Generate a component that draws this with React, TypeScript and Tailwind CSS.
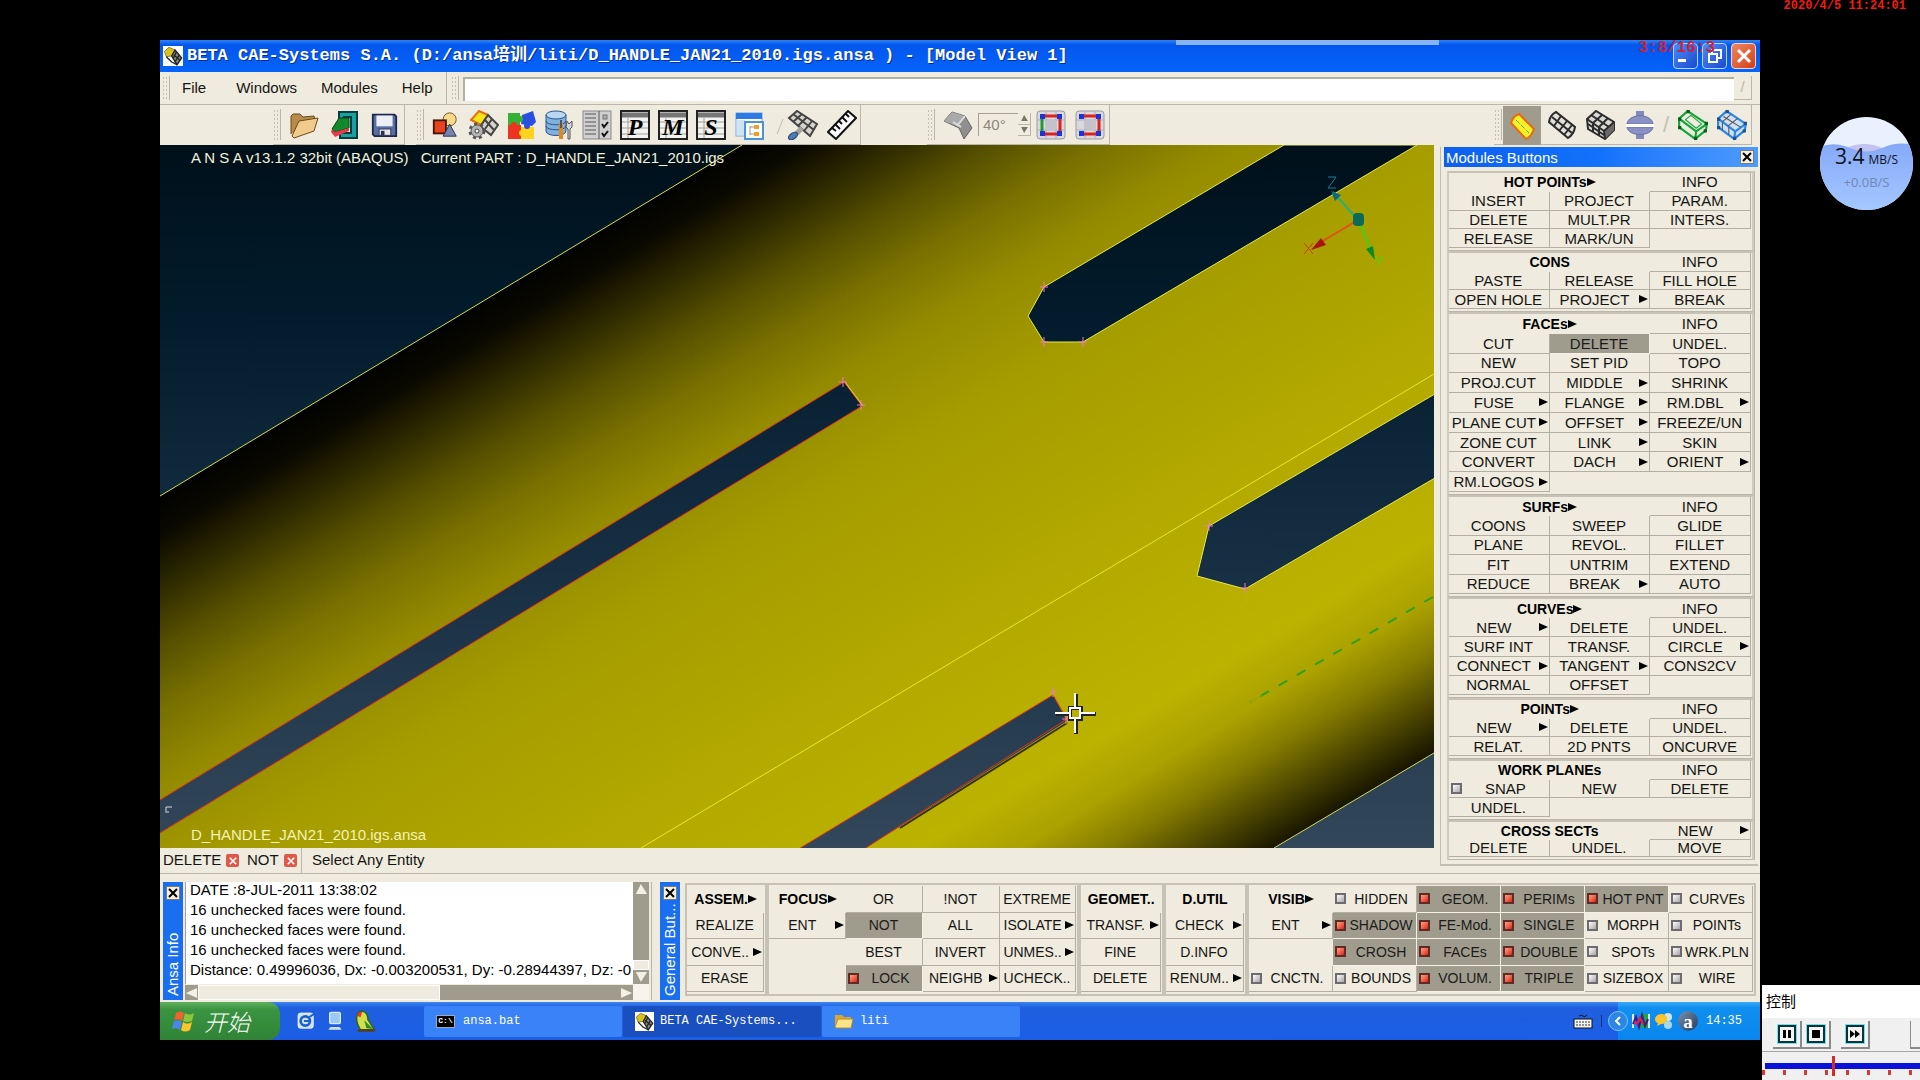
import React from "react";

type CellDef = string | null;
// Cell syntax: "#" heading, ">" suffix opens a submenu, "*" pressed, "[x]" ticked box, "[ ]" empty box

function Tri({ dir = "right", className = "" }: { dir?: "right" | "up" | "down" | "left"; className?: string }) {
  const d = {
    right: "M0 0L9 4L0 8Z",
    left: "M9 0L0 4L9 8Z",
    up: "M0 8L4 0L9 8Z",
    down: "M0 0L9 0L4 8Z",
  }[dir];
  return (
    <svg viewBox="0 0 9 8" className={`h-2 w-[9px] shrink-0 ${className}`} fill="currentColor" aria-hidden="true">
      <path d={d} />
    </svg>
  );
}

function Cell({ def, size }: { def: CellDef; size: string }) {
  if (def === null) return <span />;
  let text = def;
  const heading = text.startsWith("#");
  if (heading) text = text.slice(1);
  const wide = text.startsWith("=");
  if (wide) text = text.slice(1);
  const pressed = text.startsWith("*");
  if (pressed) text = text.slice(1);
  const arrow = text.endsWith(">");
  if (arrow) text = text.slice(0, -1);
  const box = text.startsWith("[");
  const on = text.startsWith("[x]");
  if (box) text = text.slice(3);

  if (heading)
    return (
      <button
        className={`flex min-h-0 min-w-0 items-center justify-center whitespace-nowrap text-[14px] leading-none font-bold text-black ${wide ? "col-span-2" : ""}`}
      >
        {text}
        {arrow && <Tri />}
      </button>
    );
  const tone = pressed
    ? "bg-[#9f9c8e] border-[#f4f1e6] text-[#1c1b17]"
    : "border-[#b3b0a3] text-[#151512]";
  if (box)
    return (
      <label className={`flex min-h-0 min-w-0 items-center whitespace-nowrap border-r border-b pl-[2px] leading-none ${size} ${tone}`}>
        <input
          type="checkbox"
          defaultChecked={on}
          className="size-[11px] shrink-0 appearance-none border-2 border-[#6d6a70] bg-linear-to-br from-white to-[#a9a6a4] checked:border-[#5d2a24] checked:from-[#ff9d85] checked:to-[#d90f0a]"
        />
        <span className="min-w-0 flex-1 text-center">{text}</span>
      </label>
    );
  return (
    <button className={`flex min-h-0 min-w-0 items-center whitespace-nowrap border-r border-b pr-px leading-none ${size} ${tone}`}>
      <span className="min-w-0 flex-1 text-center">{text}</span>
      {arrow && <Tri className="text-black" />}
    </button>
  );
}

const MODULES: { grow: string; cells: CellDef[] }[] = [
  {
    grow: "grow-[75]",
    cells: ["#=HOT POINTs>", "INFO", "INSERT", "PROJECT", "PARAM.", "DELETE", "MULT.PR", "INTERS.", "RELEASE", "MARK/UN", null],
  },
  { grow: "grow-[56]", cells: ["#=CONS", "INFO", "PASTE", "RELEASE", "FILL HOLE", "OPEN HOLE", "PROJECT>", "BREAK"] },
  {
    grow: "grow-[178]",
    cells: [
      "#=FACEs>", "INFO",
      "CUT", "*DELETE", "UNDEL.",
      "NEW", "SET PID", "TOPO",
      "PROJ.CUT", "MIDDLE>", "SHRINK",
      "FUSE>", "FLANGE>", "RM.DBL>",
      "PLANE CUT>", "OFFSET>", "FREEZE/UN",
      "ZONE CUT", "LINK>", "SKIN",
      "CONVERT", "DACH>", "ORIENT>",
      "RM.LOGOS>", null, null,
    ],
  },
  {
    grow: "grow-[97]",
    cells: [
      "#=SURFs>", "INFO",
      "COONS", "SWEEP", "GLIDE",
      "PLANE", "REVOL.", "FILLET",
      "FIT", "UNTRIM", "EXTEND",
      "REDUCE", "BREAK>", "AUTO",
    ],
  },
  {
    grow: "grow-[96]",
    cells: [
      "#=CURVEs>", "INFO",
      "NEW>", "DELETE", "UNDEL.",
      "SURF INT", "TRANSF.", "CIRCLE>",
      "CONNECT>", "TANGENT>", "CONS2CV",
      "NORMAL", "OFFSET", null,
    ],
  },
  { grow: "grow-[56]", cells: ["#=POINTs>", "INFO", "NEW>", "DELETE", "UNDEL.", "RELAT.", "2D PNTS", "ONCURVE"] },
  { grow: "grow-[56]", cells: ["#=WORK PLANEs", "INFO", "[ ]SNAP", "NEW", "DELETE", "UNDEL.", null, null] },
  { grow: "grow-[35]", cells: ["#=CROSS SECTs", "NEW>", "DELETE", "UNDEL.", "MOVE"] },
];

const GENERAL: { grow: string; cols: string; cells: CellDef[] }[] = [
  { grow: "grow-[77]", cols: "grid-cols-1", cells: ["#ASSEM.>", "REALIZE", "CONVE..>", "ERASE"] },
  {
    grow: "grow-[306]",
    cols: "grid-cols-4",
    cells: [
      "#FOCUS>", "OR", "!NOT", "EXTREME",
      "ENT>", "*NOT", "ALL", "ISOLATE>",
      null, "BEST", "INVERT", "UNMES..>",
      null, "*[x]LOCK", "NEIGHB>", "UCHECK..",
    ],
  },
  { grow: "grow-[79]", cols: "grid-cols-1", cells: ["#GEOMET..", "TRANSF.>", "FINE", "DELETE"] },
  { grow: "grow-[78]", cols: "grid-cols-1", cells: ["#D.UTIL", "CHECK>", "D.INFO", "RENUM..>"] },
  {
    grow: "grow-[502]",
    cols: "grid-cols-6",
    cells: [
      "#VISIB>", "[ ]HIDDEN", "*[x]GEOM.", "*[x]PERIMs", "*[x]HOT PNT", "[ ]CURVEs",
      "ENT>", "*[x]SHADOW", "*[x]FE-Mod.", "*[x]SINGLE", "[ ]MORPH", "[ ]POINTs",
      null, "*[x]CROSH", "*[x]FACEs", "*[x]DOUBLE", "[ ]SPOTs", "[ ]WRK.PLN",
      "[ ]CNCTN.", "[ ]BOUNDS", "*[x]VOLUM.", "*[x]TRIPLE", "[ ]SIZEBOX", "[ ]WIRE",
    ],
  },
];

/* ---------- toolbar drawings ---------- */

function Ico({ children, box = "0 0 30 30", className = "size-[30px]" }: { children: React.ReactNode; box?: string; className?: string }) {
  return (
    <svg viewBox={box} className={className} fill="none" aria-hidden="true">
      {children}
    </svg>
  );
}

const AppLogo = ({ className = "size-5" }: { className?: string }) => (
  <Ico className={className}>
    <rect width="30" height="30" fill="#fff" />
    <path d="M2 8L9 2L18 6L13 15L5 16Z" fill="#d8c21c" stroke="#5a5220" />
    <path d="M13 15L18 6L28 18L21 28Z" fill="#8b8a80" stroke="#222" strokeWidth="2" />
    <path d="M16 13L25 21M20 9L15 19M24 14L18 24M5 16L13 24L21 28" stroke="#222" strokeWidth="2" />
  </Ico>
);

const FolderIcon = () => (
  <Ico>
    <path d="M2 24V6L4 4H11L14 7L25 6L26 10" fill="#b98b4a" stroke="#6b4a20" />
    <path d="M3 26L10 11L29 8L25 21L5 28Z" fill="#f1cb8b" stroke="#6b4a20" />
  </Ico>
);
const LoadIcon = () => (
  <Ico>
    <path d="M10 2H28V28H11V23H22V7H15L10 12Z" fill="#17a2a0" stroke="#063b40" strokeWidth="2" />
    <path d="M3 19L10 8H20V18L6 22Z" fill="#128a2c" stroke="#06401a" />
    <path d="M3 19L6 22L20 18V21L6 27L2 22Z" fill="#e63a4a" />
  </Ico>
);
const SaveIcon = () => (
  <Ico className="size-[27px]">
    <path d="M2 4H26L28 6V28H4L2 26Z" fill="#5a6ea6" stroke="#1d2747" strokeWidth="2" />
    <rect x="6" y="5" width="18" height="12" fill="#eceff7" />
    <rect x="9" y="20" width="13" height="7" fill="#e6e6e6" stroke="#2a3355" />
    <rect x="11" y="22" width="4" height="5" fill="#2a3355" />
  </Ico>
);
const ShapesIcon = () => (
  <Ico className="size-7">
    <circle cx="20" cy="9" r="7" fill="#f7d98c" stroke="#6b5524" />
    <rect x="3" y="10" width="13" height="14" fill="#e8431c" stroke="#4a1408" strokeWidth="2" />
    <path d="M20 14L27 27H13Z" fill="#7486ae" stroke="#222c48" />
  </Ico>
);
const GearMeshIcon = () => (
  <Ico box="0 0 32 30" className="h-[30px] w-8">
    <path d="M4 10L12 1L21 5L14 15Z" fill="#f2e416" stroke="#e66f16" strokeWidth="2" />
    <path d="M15 14L21 5L31 15L24 25L14 17Z" fill="#d6d4cc" stroke="#444" strokeWidth="2" />
    <path d="M18 10L27 20M25 9L18 19" stroke="#444" strokeWidth="2" />
    <circle cx="10" cy="21" r="7" stroke="#555" strokeWidth="3" strokeDasharray="3 3" />
    <circle cx="10" cy="21" r="6" fill="#b3b3b3" stroke="#555" />
    <circle cx="10" cy="21" r="2" fill="#f4f1e6" stroke="#444" />
  </Ico>
);
const PuzzleIcon = () => (
  <Ico>
    <path d="M2 3H14V15H2Z" fill="#35b233" />
    <path d="M16 5L27 1L30 12L26 16L15 14Z" fill="#2a4fe0" />
    <path d="M2 15H15V29H2Z" fill="#ee3320" />
    <path d="M15 17H28V29H15Z" fill="#ffd21c" />
    <circle cx="14" cy="9" r="3" fill="#35b233" />
    <circle cx="8" cy="15" r="3" fill="#ee3320" />
    <circle cx="16" cy="23" r="3" fill="#ffd21c" />
    <circle cx="21" cy="16" r="3" fill="#2a4fe0" />
  </Ico>
);
const DbIcon = () => (
  <Ico>
    <path d="M2 5V21C2 27 22 27 22 21V5" fill="#7fb0e2" stroke="#2d5788" />
    <ellipse cx="12" cy="5" rx="10" ry="4" fill="#b9d7f3" stroke="#2d5788" />
    <path d="M2 11C2 16 22 16 22 11M2 16C2 21 22 21 22 16" stroke="#2d5788" />
    <path d="M17 13V21M17 21V29" stroke="#e28a12" strokeWidth="4" />
    <path d="M17 10V18" stroke="#555" strokeWidth="2" />
    <path d="M23 11L25 14L28 11V17L26 19V29H24V19L22 17Z" fill="#d3d7dc" stroke="#555" />
  </Ico>
);
const ListIcon = () => (
  <Ico>
    <rect x="1" y="1" width="28" height="28" fill="#cfcfcf" stroke="#8a8a8a" />
    <path d="M3 4H14M3 8H14M3 12H14M3 16H14M3 20H14M3 24H14M17 1V29" stroke="#555" />
    <rect x="21" y="5" width="4" height="4" fill="#aaa" stroke="#777" />
    <path d="M20 14L22 17L26 12M20 23L22 26L26 21" stroke="#111" strokeWidth="2" />
  </Ico>
);
const LetterIcon = ({ l }: { l: string }) => (
  <Ico>
    <rect x="1" y="1" width="28" height="28" fill="#f2f2ef" stroke="#222" strokeWidth="2" />
    <path d="M2 5H28" stroke="#777" strokeWidth="5" />
    <path d="M2 12H28M2 18H28M2 24H28M8 8V28" stroke="#a0a0a0" />
    <text x="15" y="25" textAnchor="middle" fontFamily="Liberation Serif, serif" fontStyle="italic" fontWeight="bold" fontSize="24" fill="#000">
      {l}
    </text>
  </Ico>
);
const WinIcon = () => (
  <Ico>
    <rect x="1" y="3" width="26" height="23" fill="#fff" stroke="#79a9dc" />
    <rect x="1" y="3" width="26" height="6" fill="#2e7be8" />
    <path d="M2 10H10V25H2Z" fill="#cfe3f7" />
    <rect x="10" y="12" width="18" height="17" fill="#fdfdf8" stroke="#4a92dc" strokeWidth="2" />
    <path d="M15 16V25M15 17H19M15 24H19" stroke="#999" />
    <rect x="19" y="15" width="5" height="4" fill="#eaa029" />
    <rect x="19" y="22" width="5" height="4" fill="#eaa029" />
  </Ico>
);
const BrushIcon = () => (
  <Ico box="0 0 44 30" className="h-[30px] w-11">
    <path d="M2 24L8 9" stroke="#c2bfb2" />
    <path d="M14 8L22 1L42 14L35 26Z" fill="#d6d4cc" stroke="#444" strokeWidth="2" />
    <path d="M18 12L27 4M23 16L32 7M29 21L37 11M18 4L39 20" stroke="#444" strokeWidth="2" />
    <path d="M27 18L21 24" stroke="#a5a39c" strokeWidth="5" />
    <ellipse cx="18" cy="26" rx="5" ry="3" fill="#4a7cb4" stroke="#1f3f66" transform="rotate(-35 18 26)" />
  </Ico>
);
const RulerIcon = () => (
  <Ico>
    <path d="M1 22L21 1L29 8L9 29Z" fill="#fff" stroke="#111" strokeWidth="2" />
    <path d="M5 18L9 21M8 14L13 19M12 11L15 14M15 7L20 12M19 4L22 7" stroke="#111" strokeWidth="2" />
  </Ico>
);
const FeatureIcon = () => (
  <Ico>
    <path d="M1 11L9 2L22 6L29 18L21 29L16 18Z" fill="#8f8f8f" stroke="#666" />
    <path d="M1 11L9 2L22 6L14 16Z" fill="#a9a9a9" />
    <path d="M14 16L22 6M10 12L18 17" stroke="#ddd" strokeWidth="2" />
  </Ico>
);
const SelIcon = ({ open }: { open?: boolean }) => (
  <Ico>
    <rect x="1" y="1" width="28" height="28" rx="3" fill="#d9d8dc" stroke="#9c9ba3" />
    <path d="M10 1V29M20 1V29M1 10H29M1 20H29" stroke="#b2b1ba" />
    <rect x="10" y="10" width="10" height="10" fill="#c3c2ca" />
    <path d="M6 6H24V24H6" stroke="#e0201a" strokeWidth="3" />
    {!open && <path d="M6 6V24" stroke="#1e9a2e" strokeWidth="3" />}
    <path d="M4 4h5v5h-5zM21 4h5v5h-5zM4 21h5v5h-5zM21 21h5v5h-5z" fill="#1b35d8" />
  </Ico>
);
const FaceIcon = () => (
  <Ico>
    <path d="M4 12Q6 5 12 3L27 18Q24 26 19 28Z" fill="#f6f22a" stroke="#ea6a12" strokeWidth="2" />
    <path d="M9 9L22 22" stroke="#5cab2a" strokeDasharray="5 2" />
  </Ico>
);
const MeshIcon = () => (
  <Ico>
    <path d="M2 12Q3 5 9 2L28 17Q27 24 21 28Z" fill="#e2e0da" stroke="#2c2c2c" strokeWidth="2" />
    <path d="M7 16L14 6M12 21L20 11M17 25L25 15M5 7L25 23" stroke="#2c2c2c" strokeWidth="2" />
  </Ico>
);
const SolidIcon = () => (
  <Ico>
    <path d="M1 9L10 1L28 12V20L19 29L2 19Z" fill="#dad8d2" stroke="#2c2c2c" strokeWidth="2" />
    <path d="M18 21L28 12V20L19 29Z" fill="#6b6a68" />
    <path d="M1 9L18 21L19 29M18 21L28 12M5 5L23 17M7 13L16 5M13 17L22 8M7 14V22M13 18V25M2 14L18 25" stroke="#2c2c2c" strokeWidth="2" />
  </Ico>
);
const SphereIcon = () => (
  <Ico>
    <rect x="11" y="1" width="8" height="28" fill="#8388bd" />
    <path d="M2 14C3 3 27 3 28 14ZM2 17C3 27 27 27 28 17Z" fill="#8b90c4" stroke="#6a6fa6" />
    <rect x="1" y="14" width="28" height="3" fill="#fff" />
  </Ico>
);
const WireCube = ({ color, mesh }: { color: string; mesh?: boolean }) => (
  <Ico className="size-8">
    <path d="M2 9L10 2L28 14L27 20L17 28L2 17Z" stroke={color} strokeWidth="2" fill={mesh ? "#cfe0f2" : "none"} />
    <path d="M2 9L18 21L28 14M18 21L17 28" stroke={color} strokeWidth="2" />
    {!mesh && <path d="M8 10L13 6L23 14L18 18Z" stroke={color} />}
    {mesh && <path d="M6 12L14 5M11 16L20 9M7 7L23 17M6 13V20M12 17V24" stroke="#555" />}
    <path d="M1 8h3v3h-3zM9 1h3v3h-3zM26 12h3v3h-3zM16 26h3v3h-3zM25 19h3v3h-3zM1 16h3v3h-3z" fill={mesh ? "#24508a" : "#0d5a20"} />
  </Ico>
);

function Tool({ label, children, className = "w-[38px]", active = false }: { label: string; children: React.ReactNode; className?: string; active?: boolean }) {
  return (
    <button aria-label={label} className={`flex h-full shrink-0 items-center justify-center ${className} ${active ? "bg-[#9f9c8e]" : ""}`}>
      {children}
    </button>
  );
}

const Grip = ({ className = "" }: { className?: string }) => (
  <span className={`my-1 w-2 shrink-0 border-r border-[#bab7aa] bg-[radial-gradient(#c4c1b4_1px,transparent_1px)] bg-size-[3px_4px] ${className}`} />
);

const MiniX = ({ label }: { label: string }) => (
  <button aria-label={label} className="flex size-[14px] shrink-0 items-center justify-center border border-[#7d7b70] bg-[#f3f0e4]">
    <svg viewBox="0 0 10 10" className="size-[10px]" stroke="#000" strokeWidth="2" aria-hidden="true">
      <path d="M1 1L9 9M9 1L1 9" />
    </svg>
  </button>
);

const RedX = ({ label }: { label: string }) => (
  <button aria-label={label} className="flex size-[13px] items-center justify-center rounded-xs bg-[#de5a48]">
    <svg viewBox="0 0 10 10" className="size-2" stroke="#fff" strokeWidth="2" aria-hidden="true">
      <path d="M1 1L9 9M9 1L1 9" />
    </svg>
  </button>
);

/* ---------- model view ---------- */

const Mark = ({ x, y }: { x: number; y: number }) => (
  <path d={`M${x - 4} ${y}h8M${x} ${y - 5}v10`} stroke="#f07ac0" />
);

function ModelScene() {
  return (
    <svg viewBox="160 145 1274 703" preserveAspectRatio="none" className="absolute inset-0 size-full" aria-label="Model">
      <defs>
        <linearGradient id="sky" gradientUnits="userSpaceOnUse" x1="0" y1="145" x2="0" y2="848">
          <stop offset="0%" stopColor="#00101a" />
          <stop offset="25%" stopColor="#021c2d" />
          <stop offset="60%" stopColor="#172f43" />
          <stop offset="100%" stopColor="#33475a" />
        </linearGradient>
        <linearGradient id="skin" gradientUnits="userSpaceOnUse" x1="262" y1="434" x2="716" y2="1186">
          <stop offset="0%" stopColor="#010100" />
          <stop offset="4%" stopColor="#0b0a00" />
          <stop offset="10%" stopColor="#353000" />
          <stop offset="15%" stopColor="#575100" />
          <stop offset="21%" stopColor="#787000" />
          <stop offset="28%" stopColor="#938a00" />
          <stop offset="39%" stopColor="#a59c00" />
          <stop offset="60%" stopColor="#b3a900" />
          <stop offset="79%" stopColor="#bcb200" />
          <stop offset="85%" stopColor="#aba100" />
          <stop offset="90%" stopColor="#857c00" />
          <stop offset="95%" stopColor="#4e4800" />
          <stop offset="100%" stopColor="#171500" />
        </linearGradient>
      </defs>
      <rect x="160" y="145" width="1274" height="703" fill="url(#sky)" />
      <path d="M160 496L742 145H1434V753L1274 848H160Z" fill="url(#skin)" />
      <path d="M160 496L742 145M1434 753L1274 848" stroke="#d8dc4a" />
      <path d="M1434 374L641 848" stroke="#e8e81e" />
      <path d="M1284 145L1044 287L1028 316L1044 342H1083L1417 145Z" fill="url(#sky)" stroke="#e8e84a" />
      <path d="M1440 391L1209 526L1197 576L1245 589L1440 475Z" fill="url(#sky)" stroke="#e8e84a" />
      <path d="M844 382L862 406L150 839V806Z" fill="url(#sky)" stroke="#e0301a" />
      <path d="M845 382L863 406" stroke="#e8d84a" />
      <path d="M1053 695L1067 721L858 853H792Z" fill="url(#sky)" />
      <path d="M1067 723L900 828" stroke="#3a3008" strokeWidth="2" />
      <path d="M792 853L1053 695L1067 719L940 800L858 853" fill="none" stroke="#e0301a" />
      <path d="M1433 597L1250 702" stroke="#2ea01e" strokeWidth="2" strokeDasharray="10 11" />
      <path d="M1250 702L1262 695" stroke="#8fa800" />
      <Mark x={1044} y={287} />
      <Mark x={1044} y={342} />
      <Mark x={1083} y={342} />
      <Mark x={1209} y={526} />
      <Mark x={1245} y={588} />
      <Mark x={843} y={382} />
      <Mark x={861} y={405} />
      <Mark x={1053} y={692} />
      <Mark x={1066} y={719} />
      <path d="M166 807h6M166 807v6M169 812h-2" stroke="#d8d8d8" />
      <path d="M1358 220L1333 192" stroke="#2bb07c" strokeWidth="2" />
      <path d="M1331 191L1341 195L1335 201Z" fill="#0b6a80" />
      <path d="M1358 220L1316 245" stroke="#e0501c" strokeWidth="2" />
      <path d="M1311 250L1321 238L1326 245Z" fill="#a81408" />
      <path d="M1358 220L1372 252" stroke="#3fd01c" strokeWidth="2" />
      <path d="M1366 249L1373 246L1375 260Z" fill="#0c8a24" />
      <rect x="1353" y="213" width="11" height="13" rx="4" fill="#0c6b54" />
      <path d="M1328 177h8l-8 11h8" fill="none" stroke="#1c7c98" />
      <path d="M1304 243l9 11M1313 243l-9 11" stroke="#e0301c" />
      <path d="M1375 256l4 5M1383 256l-6 9" stroke="#3be01c" />
      <g transform="translate(1075 713)">
        <path d="M1 -19V-6M1 7V21M-19 1H-6M7 1H21" stroke="#222" strokeWidth="4" />
        <rect x="-5" y="-5" width="11" height="11" fill="none" stroke="#222" strokeWidth="4" />
        <path d="M0 -20V-6M0 6V20M-20 0H-6M6 0H20" stroke="#fff" strokeWidth="2" />
        <rect x="-5" y="-5" width="10" height="10" fill="none" stroke="#fff" strokeWidth="2" />
      </g>
    </svg>
  );
}

const LOG = [
  "DATE :8-JUL-2011 13:38:02",
  "16 unchecked faces were found.",
  "16 unchecked faces were found.",
  "16 unchecked faces were found.",
  "Distance: 0.49996036, Dx: -0.003200531, Dy: -0.28944397, Dz: -0",
];

function SideTitle({ text }: { text: string }) {
  return (
    <div className="flex w-5 shrink-0 flex-col items-center gap-2 overflow-hidden bg-[#1a6ff0] py-1">
      <MiniX label={`Close ${text}`} />
      <span className="flex min-h-0 flex-1 rotate-180 items-center text-[15px] leading-5 whitespace-nowrap text-white [writing-mode:vertical-rl]">
        {text}
      </span>
    </div>
  );
}

function TitleBar() {
  return (
    <header className="flex h-8 shrink-0 items-center bg-linear-to-b from-[#2f83f5] via-[#0356ee] via-15% to-[#0564fb] pr-1 pl-[3px]">
      <AppLogo />
      <h1 className="ml-1 min-w-0 flex-1 truncate font-['Liberation_Mono','Noto_Sans_CJK_SC',monospace] text-[17px] font-bold whitespace-pre text-white [text-shadow:1px_1px_0_#0a2f8a]">
        BETA CAE-Systems S.A. (D:/ansa培训/liti/D_HANDLE_JAN21_2010.igs.ansa ) - [Model View 1]
      </h1>
      <div className="flex gap-1">
        <button aria-label="Minimize" className="flex h-[26px] w-[25px] items-end rounded-sm border border-[#bcd3f8] bg-linear-to-br from-[#4f8af5] to-[#1a49cf] p-1 pb-[6px]">
          <span className="h-[3px] w-2 bg-white" />
        </button>
        <button aria-label="Restore" className="flex h-[26px] w-[25px] items-center justify-center rounded-sm border border-[#bcd3f8] bg-linear-to-br from-[#4f8af5] to-[#1a49cf]">
          <svg viewBox="0 0 16 16" className="size-4" fill="none" stroke="#fff" strokeWidth="2" aria-hidden="true">
            <path d="M5 6V2H14V10H11M2 6H10V14H2Z" />
          </svg>
        </button>
        <button aria-label="Close" className="flex h-[26px] w-[25px] items-center justify-center rounded-sm border border-[#f6d3c8] bg-linear-to-br from-[#f0865f] to-[#d13c10]">
          <svg viewBox="0 0 16 16" className="size-4" stroke="#fff" strokeWidth="3" aria-hidden="true">
            <path d="M2 2L14 14M14 2L2 14" />
          </svg>
        </button>
      </div>
    </header>
  );
}

function Toolbar() {
  const group = "flex h-full shrink-0 items-stretch border-r border-b border-[#bab7aa]";
  return (
    <div className="flex h-10 shrink-0 items-stretch bg-[#efebde]">
      <div className={`ml-[113px] ${group}`}>
        <Grip className="mr-[3px]" />
        <Tool label="Open" className="w-10"><FolderIcon /></Tool>
        <Tool label="Load" className="w-10"><LoadIcon /></Tool>
        <Tool label="Save" className="w-10"><SaveIcon /></Tool>
      </div>
      <div className={`ml-[11px] ${group}`}>
        <Grip className="mr-[2px]" />
        <Tool label="Shapes"><ShapesIcon /></Tool>
        <Tool label="Mesh settings"><GearMeshIcon /></Tool>
        <Tool label="Parts"><PuzzleIcon /></Tool>
        <Tool label="Database"><DbIcon /></Tool>
        <Tool label="Checks"><ListIcon /></Tool>
        <Tool label="Properties"><LetterIcon l="P" /></Tool>
        <Tool label="Materials"><LetterIcon l="M" /></Tool>
        <Tool label="Sets"><LetterIcon l="S" /></Tool>
        <Tool label="Windows list" className="w-10"><WinIcon /></Tool>
        <Tool label="Brush" className="w-[54px]"><BrushIcon /></Tool>
        <Tool label="Measure" className="w-9"><RulerIcon /></Tool>
      </div>
      <div className={`ml-[66px] ${group}`}>
        <Grip className="mr-1" />
        <Tool label="Feature"><FeatureIcon /></Tool>
        <input
          aria-label="Angle"
          defaultValue="40°"
          className="my-2 ml-px w-10 border-t border-l border-[#a5a295] bg-[#efebde] pl-1 text-[15px] text-[#8b897e]"
        />
        <div className="my-2 flex w-[13px] flex-col border-r border-[#bab7aa] text-[#77756a]">
          <button aria-label="Increase angle" className="flex flex-1 items-center justify-center border-b border-[#bab7aa]">
            <Tri dir="up" className="scale-75" />
          </button>
          <button aria-label="Decrease angle" className="flex flex-1 items-center justify-center border-b border-[#bab7aa]">
            <Tri dir="down" className="scale-75" />
          </button>
        </div>
        <Tool label="Closed selection" className="w-10"><SelIcon /></Tool>
        <Tool label="Open selection" className="w-[38px]"><SelIcon open /></Tool>
      </div>
      <div className={`mr-2 ml-auto ${group}`}>
        <Grip className="mr-px" />
        <Tool label="Topo" className="my-px w-[38px]" active><FaceIcon /></Tool>
        <Tool label="Mesh" className="ml-px w-[39px]"><MeshIcon /></Tool>
        <Tool label="Volume mesh" className="w-[39px]"><SolidIcon /></Tool>
        <Tool label="Deck" className="w-[39px]"><SphereIcon /></Tool>
        <span className="flex w-[14px] items-center justify-center text-[22px] text-[#c2bfb2]">/</span>
        <Tool label="Morph" className="w-[39px]"><WireCube color="#12a53a" /></Tool>
        <Tool label="Hexa block" className="w-[39px]"><WireCube color="#2a86e0" mesh /></Tool>
      </div>
    </div>
  );
}

function InfoLog() {
  return (
    <section className="ml-[2px] grid w-[464px] shrink-0 grid-cols-[1fr_16px] grid-rows-[1fr_16px]">
      <div className="flex min-w-0 flex-col overflow-hidden border-l border-[#a5a295] bg-white pl-1 text-[15px] leading-5 whitespace-nowrap text-black">
        {LOG.map((l, i) => (
          <p key={i} className="h-5 shrink-0 first:-mt-[2px]">{l}</p>
        ))}
      </div>
      <div className="flex flex-col bg-[#9f9c8e] text-[#f3f0e4]">
        <button aria-label="Scroll up" className="flex h-[14px] items-center justify-center"><Tri dir="up" className="scale-125" /></button>
        <span className="mt-auto h-[10px] border border-white bg-[#efebde]" />
        <button aria-label="Scroll down" className="flex h-[14px] items-center justify-center"><Tri dir="down" className="scale-125" /></button>
      </div>
      <div className="mt-px flex items-stretch bg-[#9f9c8e] text-[#f3f0e4]">
        <button aria-label="Scroll left" className="flex w-[13px] items-center justify-center"><Tri dir="left" className="scale-125" /></button>
        <span className="w-[54%] border border-white bg-[#efebde]" />
        <button aria-label="Scroll right" className="ml-auto flex w-[13px] items-center justify-center"><Tri className="scale-125" /></button>
      </div>
      <span className="bg-[#f6f4ec]" />
    </section>
  );
}

function Taskbar() {
  const task = "flex h-[31px] w-[198px] items-center rounded-xs";
  return (
    <footer className="flex h-[38px] shrink-0 items-center bg-linear-to-b from-[#3d83f0] via-[#1f5fdf] via-15% to-[#1b5ee6] font-['Liberation_Mono','Noto_Sans_CJK_SC',monospace] text-[12px] text-white">
      <button className="flex h-full w-[120px] items-center gap-2 rounded-r-xl bg-linear-to-b from-[#5fb05f] via-[#3a9440] via-20% to-[#2f8436] pl-3">
        <svg viewBox="0 0 24 24" className="size-6" aria-hidden="true">
          <path d="M4 4Q8 1 12 4L10 12Q7 9 2 11Z" fill="#f0622d" />
          <path d="M13 4Q17 7 22 4L20 12Q15 14 11 12Z" fill="#8cc63e" />
          <path d="M2 12Q6 10 10 13L8 21Q4 18 0 20Z" fill="#4a86e8" />
          <path d="M11 13Q15 16 20 13L18 21Q13 24 9 21Z" fill="#fbc62b" />
        </svg>
        <span className="font-['Noto_Sans_CJK_SC',sans-serif] text-[23px] leading-none font-light italic">开始</span>
      </button>
      <div className="ml-4 flex w-32 items-center gap-[9px]">
        <button aria-label="Internet">
          <Ico className="size-5">
            <rect x="3" y="3" width="23" height="23" rx="4" fill="#cfe2fa" stroke="#fff" />
            <circle cx="14" cy="15" r="7" stroke="#1d62c8" strokeWidth="4" />
            <path d="M12 15H21M20 9L28 4" stroke="#1d62c8" strokeWidth="3" />
          </Ico>
        </button>
        <button aria-label="Desktop">
          <Ico className="size-5">
            <rect x="7" y="2" width="16" height="17" rx="2" fill="#9cc8f8" stroke="#d9ebff" strokeWidth="2" />
            <path d="M8 24H22L25 28H5Z" fill="#cfe0f4" />
          </Ico>
        </button>
        <button aria-label="Parrot">
          <Ico className="size-[22px]">
            <path d="M4 8Q6 0 13 2Q19 5 19 13L28 27H9Q2 17 4 8Z" fill="#cfe04a" stroke="#33601b" strokeWidth="2" />
            <path d="M14 14L26 26L17 25Z" fill="#2f8c2c" />
            <path d="M4 8Q6 2 11 3L9 10Z" fill="#e23a1c" />
            <path d="M5 28H28" stroke="#5a3a10" strokeWidth="3" />
          </Ico>
        </button>
      </div>
      <button className={`${task} gap-2 bg-[#3a82f7] pl-3`}>
        <span className="flex h-[13px] w-[19px] items-center justify-center border border-[#9ab] bg-black text-[8px] font-bold">C:\</span>
        ansa.bat
      </button>
      <button className={`${task} ml-px gap-[6px] bg-[#1a4fbf] pl-3`}>
        <AppLogo className="size-[19px]" />
        BETA CAE-Systems...
      </button>
      <button className={`${task} ml-px gap-[6px] bg-[#3a82f7] pl-3`}>
        <Ico className="h-4 w-5" box="0 0 20 16">
          <path d="M1 14V2H8L10 4H17V14Z" fill="#d9a834" />
          <path d="M1 14L4 6H19L17 15H2Z" fill="#fbe58a" stroke="#b98c1c" />
        </Ico>
        liti
      </button>
      <button aria-label="Keyboard" className="ml-auto">
        <Ico className="h-4 w-5" box="0 0 20 16">
          <path d="M6 3Q8 1 10 3T14 2" stroke="#111" />
          <rect x="1" y="6" width="18" height="9" fill="#f4f4f0" stroke="#111" />
          <path d="M3 9H17M3 12H17" stroke="#333" strokeDasharray="2 1" />
        </Ico>
      </button>
      <span className="mr-4 ml-2 h-3 w-px bg-[#12306e]" />
      <div className="flex h-full w-[142px] items-center bg-linear-to-b from-[#35a8f8] via-[#0f8fee] via-15% to-[#0a86ee]">
        <button aria-label="Show hidden icons" className="-ml-[10px] flex size-5 items-center justify-center rounded-full border border-[#7fc0ff] bg-[#2c86e4]">
          <svg viewBox="0 0 10 10" className="size-[10px]" fill="none" stroke="#fff" strokeWidth="2" aria-hidden="true">
            <path d="M7 1L3 5L7 9" />
          </svg>
        </button>
        <Ico className="ml-[3px] h-5 w-5" box="0 0 20 20">
          <path d="M2 3V17M18 3V17" stroke="#dfe6f0" strokeWidth="2" />
          <rect x="10" y="3" width="7" height="14" fill="#18a83c" />
          <path d="M2 13L5 6L8 16L11 4L14 15L17 8" stroke="#4a1488" strokeWidth="2" />
          <path d="M3 11L6 13L9 7L12 13" stroke="#d02a4a" strokeWidth="2" />
        </Ico>
        <Ico className="ml-[3px] h-5 w-5" box="0 0 20 20">
          <circle cx="14" cy="6" r="4" fill="#cfe6f5" />
          <circle cx="14" cy="14" r="4" fill="#a8d8e8" />
          <path d="M1 8Q2 3 8 3Q14 4 13 9Q12 13 7 13L3 15L4 12Q1 11 1 8Z" fill="#fcc52c" />
        </Ico>
        <span className="ml-1 flex size-5 items-center justify-center rounded-full bg-linear-to-br from-[#7f93ad] to-[#1e3c66] font-['Liberation_Serif',serif] text-[19px] leading-none font-bold">
          a
        </span>
        <time className="ml-2">14:35</time>
      </div>
    </footer>
  );
}

function PlayerButton({ label, d }: { label: string; d: string }) {
  return (
    <button aria-label={label} className="flex h-7 w-[29px] items-center justify-center border-r-2 border-b-2 border-[#8a8a8a] bg-[#f2f2f2]">
      <svg viewBox="0 0 20 20" className="size-5" aria-hidden="true">
        <rect width="20" height="20" fill="#6fe3ea" />
        <rect x="2" y="2" width="16" height="16" fill="#f4f4f4" stroke="#0f3238" strokeWidth="2" />
        <path d={d} fill="#000" />
      </svg>
    </button>
  );
}

export default function App() {
  return (
    <div className="relative h-screen overflow-hidden bg-black px-40 py-10 font-['Liberation_Sans',Arial,sans-serif] text-[15px] text-[#151512]">
      <main className="flex h-full flex-col bg-[#efebde]">
        <TitleBar />
        <div className="flex h-[33px] shrink-0 items-stretch border-b border-[#bab7aa]">
          <Grip className="ml-[2px]" />
          <nav className="flex w-[277px] items-center border-r border-[#bab7aa]">
            <button className="mr-1 pr-[14px] pl-3">File</button>
            <button className="px-3">Windows</button>
            <button className="px-3">Modules</button>
            <button className="px-3">Help</button>
          </nav>
          <Grip className="ml-1" />
          <input
            aria-label="Command"
            className="mt-[5px] mb-[3px] ml-1 min-w-0 flex-1 border-t-2 border-l-2 border-[#b3b0a3] bg-white px-1 outline-none"
          />
          <span className="my-1 flex w-[18px] items-center justify-center border-r border-b border-[#bab7aa] text-[#bab7aa]">/</span>
          <span className="w-2" />
        </div>
        <Toolbar />

        <div className="flex min-h-0 flex-1 border-b border-[#bab7aa]">
          <div className="flex min-w-0 flex-1 flex-col">
            <section className="relative flex min-h-0 flex-1 flex-col justify-between overflow-hidden px-[31px] py-1 text-[#f2f2dc]">
              <ModelScene />
              <p className="relative flex gap-3 leading-[18px]">
                <span>A N S A v13.1.2 32bit (ABAQUS)</span>
                <span>Current PART : D_HANDLE_JAN21_2010.igs</span>
              </p>
              <p className="relative leading-[18px] text-[#f4f2b4]">D_HANDLE_JAN21_2010.igs.ansa</p>
            </section>
            <div className="flex h-[25px] shrink-0 items-center pl-[3px]">
              <span className="w-[63px]">DELETE</span>
              <RedX label="Leave DELETE" />
              <span className="ml-2 w-[37px]">NOT</span>
              <RedX label="Leave NOT" />
              <span className="ml-1 h-full w-px bg-[#bab7aa]" />
              <span className="ml-[10px]">Select Any Entity</span>
            </div>
          </div>

          <aside className="flex w-[326px] shrink-0 flex-col pt-[2px] pr-[2px] pb-[7px] pl-[6px]">
            <div className="flex min-h-0 flex-1 flex-col border-b-2 border-l border-[#c2bfb2] pb-[4px] pl-[3px]">
              <div className="flex h-5 shrink-0 items-center justify-between bg-linear-to-r from-[#0d5ff0] via-[#1272fb] to-[#4d9bff] pr-1 pl-[2px] text-white">
                <h2 className="leading-none">Modules Buttons</h2>
                <MiniX label="Close Modules Buttons" />
              </div>
              <div className="mt-1 mr-[3px] ml-[3px] flex min-h-0 flex-1 flex-col border-r border-[#bab7aa]">
                {MODULES.map((g, i) => (
                  <section
                    key={i}
                    className={`grid min-h-0 basis-0 auto-rows-fr grid-cols-3 border-x-2 border-t-2 border-b border-t-[#c6c3b6] border-x-[#cfccbf] border-b-[#bab7aa] pr-px pb-[2px] ${g.grow}`}
                  >
                    {g.cells.map((c, j) => (
                      <Cell key={j} def={c} size="text-[15px]" />
                    ))}
                  </section>
                ))}
              </div>
            </div>
          </aside>
        </div>

        <div className="flex h-32 shrink-0 items-stretch pt-2 pr-1 pb-[2px] pl-[3px]">
          <SideTitle text="Ansa Info" />
          <InfoLog />
          <span className="mr-2 ml-[2px] w-px bg-[#bab7aa]" />
          <SideTitle text="General But..." />
          <div className="mt-px mb-1 ml-[5px] flex min-w-0 flex-1 items-stretch">
            {GENERAL.map((g, i) => (
              <section
                key={i}
                className={`grid min-w-0 basis-0 grid-rows-4 border-2 border-[#c6c3b6] pt-px pr-px pb-[2px] ${g.grow} ${g.cols}`}
              >
                {g.cells.map((c, j) => (
                  <Cell key={j} def={c} size="text-[14px]" />
                ))}
              </section>
            ))}
          </div>
        </div>
        <Taskbar />
      </main>

      <div className="absolute top-10 right-[481px] h-[5px] w-[263px] bg-[#86b4f4]" />
      <p className="absolute top-0 right-[14px] font-['Liberation_Mono',monospace] text-[12px] leading-3 font-bold text-[#f01c14]">2020/4/5 11:24:01</p>
      <p className="absolute top-10 right-[205px] font-['Liberation_Mono',monospace] text-[16px] leading-4 font-bold text-[#c8243c]">3:8/16:3</p>

      <div className="absolute top-[117px] right-[7px] flex size-[93px] flex-col items-center justify-center gap-1 overflow-hidden rounded-full bg-[#e9f1fe] pt-1 font-['Open_Sans',sans-serif]">
        <svg viewBox="0 0 93 93" className="absolute inset-0 size-full" aria-hidden="true">
          <defs>
            <linearGradient id="water" x1="0" y1="0" x2="0" y2="1">
              <stop offset="0%" stopColor="#86a9f8" />
              <stop offset="100%" stopColor="#a4c8ff" />
            </linearGradient>
          </defs>
          <path d="M24 32Q44 22 64 32L50 38Z" fill="#c3c3f2" />
          <path d="M0 30Q14 24 30 31T62 31T93 28V93H0Z" fill="url(#water)" />
        </svg>
        <p className="relative flex items-baseline gap-1 leading-6 text-[#10131a]">
          <span className="text-[21px]">3.4</span>
          <span className="text-[12px]">MB/S</span>
        </p>
        <p className="relative text-[13px] leading-3 text-[#7288b4]">+0.0B/S</p>
      </div>

      <section className="absolute right-0 bottom-0 flex h-[95px] w-[158px] flex-col overflow-hidden bg-[#f0f0f0]">
        <h2 className="flex h-[33px] items-center bg-white pl-1 font-['Noto_Sans_CJK_SC',sans-serif] text-[15px] text-black">控制</h2>
        <div className="flex h-[34px] shrink-0 items-start border-b border-[#a5a5a5] pt-[3px] pl-[11px]">
          <PlayerButton label="Pause" d="M6 6h3v8h-3zM11 6h3v8h-3z" />
          <PlayerButton label="Stop" d="M6 6h8v8h-8z" />
          <span className="w-[10px]" />
          <PlayerButton label="Fast forward" d="M5 6L10 10L5 14ZM10 6L15 10L10 14Z" />
          <span className="ml-auto h-7 w-[10px] border-b-2 border-l border-[#8a8a8a] bg-[#f2f2f2]" />
        </div>
        <input
          type="range"
          aria-label="Position"
          defaultValue={44}
          className="mt-1 ml-[3px] h-5 shrink-0 appearance-none bg-[linear-gradient(#0b12d8,#0b12d8)] bg-size-[100%_6px] bg-center bg-no-repeat [&::-webkit-slider-thumb]:h-5 [&::-webkit-slider-thumb]:w-[3px] [&::-webkit-slider-thumb]:appearance-none [&::-webkit-slider-thumb]:bg-[#d42a2a]"
        />
        <div className="-mt-[6px] flex gap-[18px]">
          {Array.from({ length: 8 }, (_, i) => (
            <span key={i} className="h-[5px] w-[3px] shrink-0 bg-[#d43a34]" />
          ))}
        </div>
      </section>
    </div>
  );
}
